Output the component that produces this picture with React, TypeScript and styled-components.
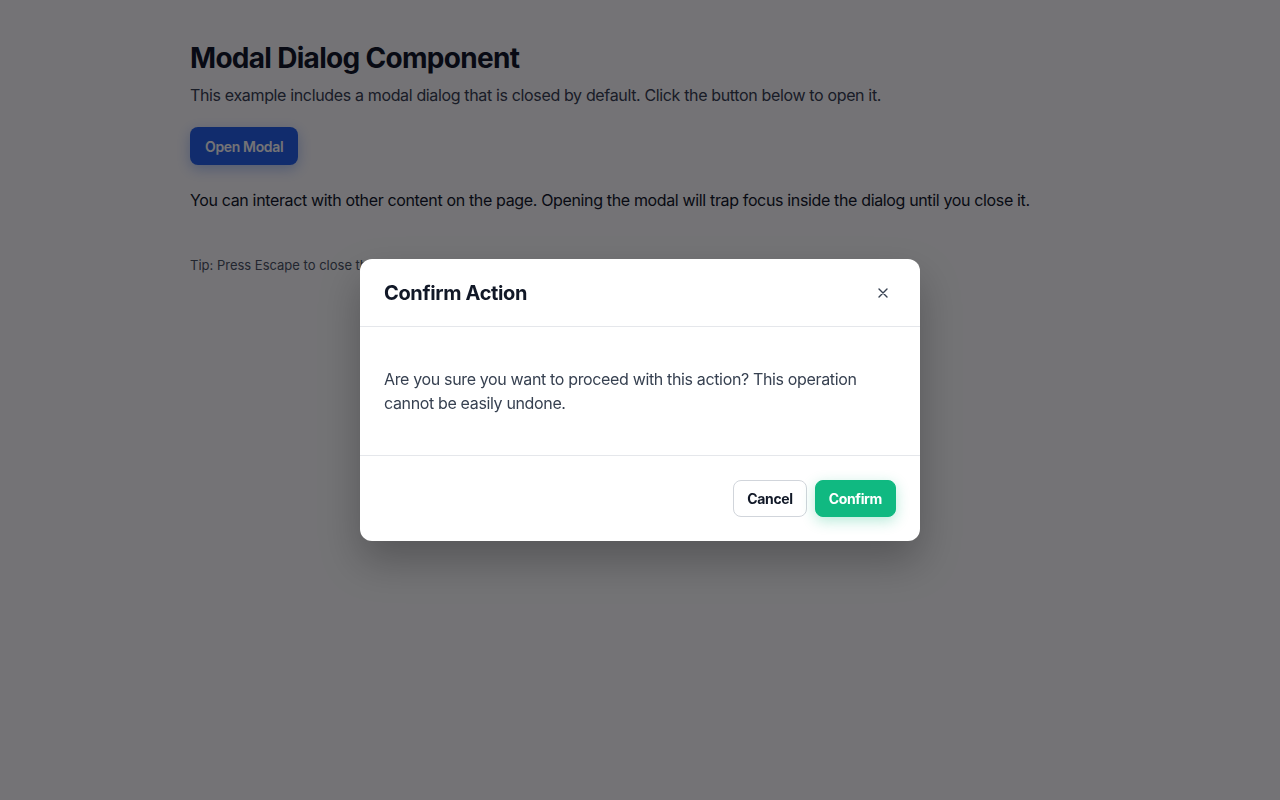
import React, { useState } from 'react';
import styled, { createGlobalStyle } from 'styled-components';

const GlobalStyle = createGlobalStyle`
	* {
		box-sizing: border-box;
	}
	body {
		margin: 0;
		background: #ffffff;
		font-family: Inter, 'Noto Sans', sans-serif;
		letter-spacing: -0.022em;
		color: #111827;
	}
`;

const Page = styled.main`
	max-width: 900px;
	margin: 0 auto;
	padding: 40px 0;
`;

const Title = styled.h1`
	margin: 0 0 7px;
	font-size: 28px;
	line-height: 36px;
	font-weight: 700;
	letter-spacing: -0.025em;
	color: #111827;
`;

const Lead = styled.p`
	margin: 0 0 20px;
	font-size: 16px;
	line-height: 24px;
	color: #374151;
`;

const PrimaryButton = styled.button`
	height: 38px;
	padding: 0 15px;
	border: none;
	border-radius: 8px;
	background: #2563eb;
	color: #ffffff;
	font-family: inherit;
	letter-spacing: inherit;
	font-size: 14px;
	font-weight: 600;
	box-shadow: 0 4px 14px rgba(37, 99, 235, 0.35);
	cursor: pointer;
`;

const Text = styled.p`
	margin: 23px 0 0;
	font-size: 16px;
	line-height: 24px;
	color: #111827;
`;

const Tip = styled.p`
	margin: 44px 0 0;
	font-size: 13px;
	line-height: 18px;
	letter-spacing: 0;
	color: #4b5563;
`;

const Overlay = styled.div`
	position: fixed;
	inset: 0;
	background: rgba(2, 0, 6, 0.55);
	display: flex;
	align-items: center;
	justify-content: center;
`;

const Dialog = styled.div`
	width: 560px;
	background: #ffffff;
	border-radius: 12px;
	box-shadow: 0 20px 40px rgba(0, 0, 0, 0.25);
	overflow: hidden;
`;

const Header = styled.div`
	display: flex;
	align-items: center;
	justify-content: space-between;
	padding: 18px 21px 17px 24px;
	border-bottom: 1px solid #e5e7eb;
`;

const DialogTitle = styled.h2`
	margin: 0;
	font-size: 20px;
	line-height: 30px;
	font-weight: 700;
	color: #111827;
`;

const CloseButton = styled.button`
	width: 32px;
	height: 32px;
	display: flex;
	align-items: center;
	justify-content: center;
	border: none;
	background: transparent;
	border-radius: 6px;
	color: #374151;
	cursor: pointer;
	padding: 0;
`;

const Body = styled.div`
	padding: 40px 24px;
	font-size: 16px;
	line-height: 24px;
	color: #374151;
	border-bottom: 1px solid #e5e7eb;
`;

const Footer = styled.div`
	display: flex;
	justify-content: flex-end;
	gap: 8px;
	padding: 24px;
`;

const DialogButton = styled.button<{ $primary?: boolean }>`
	height: 37px;
	padding: 0 13px;
	border-radius: 8px;
	font-family: inherit;
	letter-spacing: inherit;
	font-size: 14px;
	font-weight: 700;
	cursor: pointer;
	border: 1px solid ${(p) => (p.$primary ? '#10b981' : '#d1d5db')};
	background: ${(p) => (p.$primary ? '#10b981' : '#ffffff')};
	color: ${(p) => (p.$primary ? '#ffffff' : '#111827')};
	box-shadow: ${(p) => (p.$primary ? '0 4px 14px rgba(16, 185, 129, 0.3)' : 'none')};
`;

const App: React.FC = () => {
	const [open, setOpen] = useState(true);

	return (
		<>
			<GlobalStyle />
			<Page>
				<Title>Modal Dialog Component</Title>
				<Lead>
					This example includes a modal dialog that is closed by default. Click the button below to open
					it.
				</Lead>
				<PrimaryButton onClick={() => setOpen(true)}>Open Modal</PrimaryButton>
				<Text>
					You can interact with other content on the page. Opening the modal will trap focus inside the
					dialog until you close it.
				</Text>
				<Tip>Tip: Press Escape to close the modal, or click outside of it.</Tip>
			</Page>
			{open ? (
				<Overlay>
					<Dialog role="dialog" aria-modal="true">
						<Header>
							<DialogTitle>Confirm Action</DialogTitle>
							<CloseButton aria-label="Close" onClick={() => setOpen(false)}>
								<svg width="10" height="10" viewBox="0 0 10 10" fill="none">
									<path d="M1 1L9 9M9 1L1 9" stroke="currentColor" strokeWidth="1.4" strokeLinecap="round" />
								</svg>
							</CloseButton>
						</Header>
						<Body>
							Are you sure you want to proceed with this action? This operation cannot be easily undone.
						</Body>
						<Footer>
							<DialogButton onClick={() => setOpen(false)}>Cancel</DialogButton>
							<DialogButton $primary onClick={() => setOpen(false)}>
								Confirm
							</DialogButton>
						</Footer>
					</Dialog>
				</Overlay>
			) : null}
		</>
	);
};

export default App;
